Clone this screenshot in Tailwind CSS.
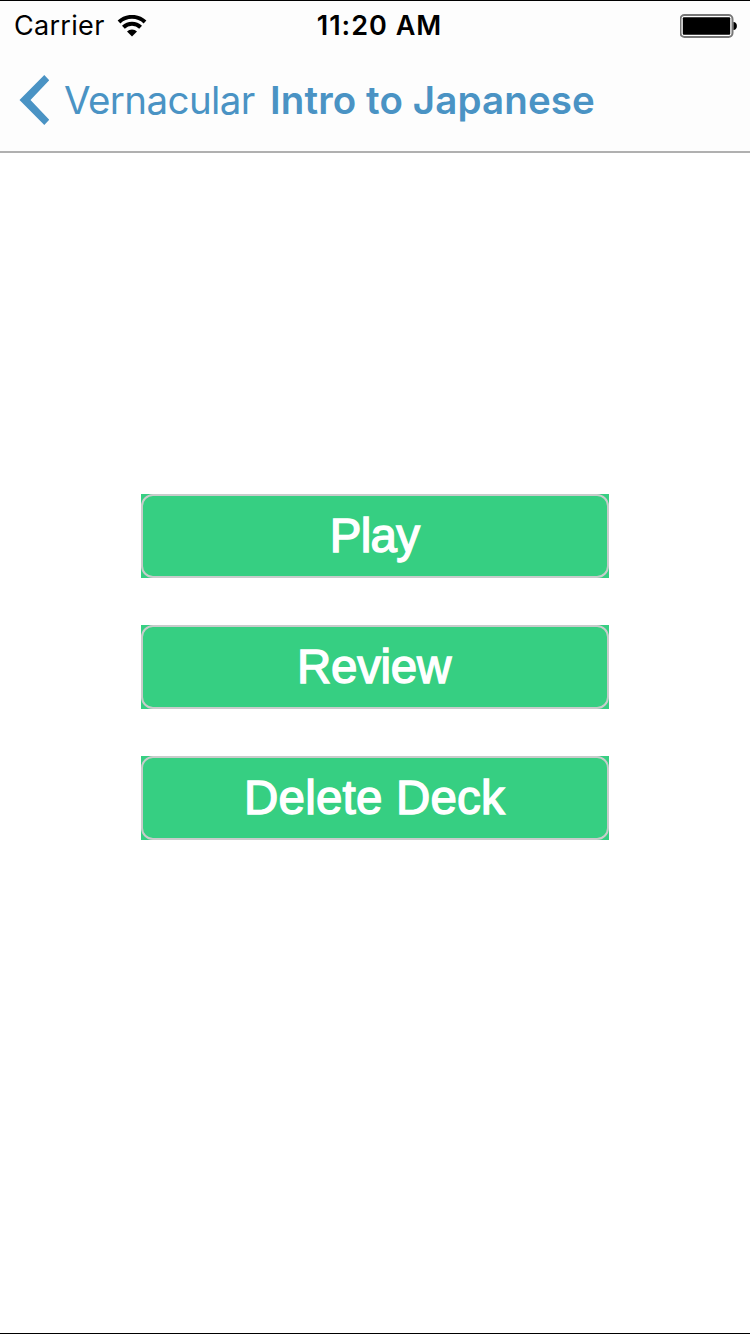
<!DOCTYPE html>
<html lang="en">
<head>
<meta charset="utf-8">
<title>Intro to Japanese</title>
<script src="https://cdn.jsdelivr.net/npm/@tailwindcss/browser@4"></script>
</head>
<body class="bg-white">
<div class="flex h-[1334px] w-[750px] flex-col overflow-hidden border-y border-black bg-white font-['Inter','Liberation_Sans',sans-serif]">
  <header class="flex h-[152px] shrink-0 flex-col border-b-2 border-[#b0b0b0] bg-[#fdfdfd]">
    <div class="grid h-[48px] grid-cols-3 items-center pl-[14px] pr-[12px] text-[27px] leading-[48px] text-black">
      <div class="flex items-center gap-[12px]">
        <span class="pt-[1px] tracking-[0.3px]">Carrier</span>
        <svg class="h-[22px] w-[30px]" viewBox="0 0 30 22" fill="none" stroke="#000" stroke-width="4">
          <path d="M2 7a19 19 0 0 1 26 0"/>
          <path d="M6.4 12.2a12.4 12.4 0 0 1 17.2 0"/>
          <path d="M10 16.6a6.8 6.8 0 0 1 10 0L15 21.5Z" fill="#000" stroke="none"/>
        </svg>
      </div>
      <span class="whitespace-nowrap pl-[7px] pt-[1px] text-center font-semibold tracking-[1px]">11:20 AM</span>
      <svg class="h-[24px] w-[58px] justify-self-end" viewBox="0 0 58 24">
        <rect x="0.5" y="1" width="52" height="22" rx="4" fill="#fff" stroke="#777" stroke-width="2"/>
        <rect x="2.8" y="3.2" width="47.4" height="17.6" rx="1" fill="#000"/>
        <path d="M53.5 8c4.5 0 4.5 8 0 8Z" fill="#000"/>
      </svg>
    </div>
    <nav class="flex h-[102px] items-center pl-[19px] text-[38.5px] leading-[102px] text-[#4a93c4]">
      <svg class="mr-[15px] h-[50px] w-[30px] shrink-0" viewBox="0 0 30 50" fill="currentColor"><path d="M0.5 25 25.3 0 30.2 5.2 11.5 25 30.2 44.8 25.3 50Z"/></svg>
      <span class="w-[206px] whitespace-nowrap font-normal tracking-[-0.6px]">Vernacular</span>
      <span class="whitespace-nowrap font-semibold tracking-[0.12px]">Intro to Japanese</span>
    </nav>
  </header>
  <main class="flex flex-col items-center gap-[47px] pt-[341px] font-['Liberation_Sans',Arial,sans-serif] text-[47.5px] leading-[79px] text-white">
    <button class="h-[84px] w-[468px] bg-[#36cf82]"><span class="block h-[84px] rounded-[12px] border-2 border-[#c8cccb] pr-[1px] tracking-[-0.7px] [-webkit-text-stroke:1.4px_white]">Play</span></button>
    <button class="h-[84px] w-[468px] bg-[#36cf82]"><span class="block h-[84px] rounded-[12px] border-2 border-[#c8cccb] pr-[2px] tracking-[-0.3px] [-webkit-text-stroke:1.4px_white]">Review</span></button>
    <button class="h-[84px] w-[468px] bg-[#36cf82]"><span class="block h-[84px] rounded-[12px] border-2 border-[#c8cccb] pr-[1px] tracking-[0.2px] [-webkit-text-stroke:1.4px_white]">Delete Deck</span></button>
  </main>
</div>
</body>
</html>
